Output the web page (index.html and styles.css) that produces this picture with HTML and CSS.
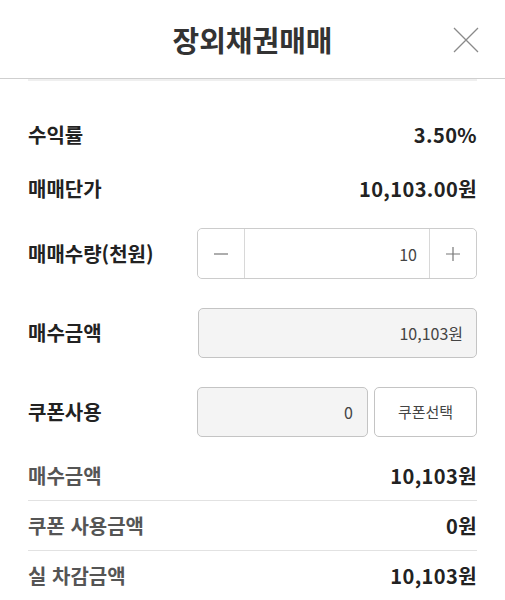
FILE: index.html
```html
<!DOCTYPE html>
<html lang="ko">
<head>
    <meta charset="UTF-8">
    <meta name="viewport" content="width=device-width, initial-scale=1.0">
    <title>장외채권매매</title>
    <link rel="stylesheet" href="styles.css">
</head>
<body>

    <div class="popup">
        <div class="popup-header">
            <h2>장외채권매매</h2>
            <button type="button" class="close-btn" aria-label="닫기">
                <svg width="26" height="26" viewBox="0 0 26 26">
                    <path d="M1 1 L25 25 M25 1 L1 25" stroke="#8a8a8a" stroke-width="1.3" fill="none"/>
                </svg>
            </button>
        </div>
        <div class="header-shade"></div>

        <div class="content">
            <div class="info-row">
                <span class="label">수익률</span>
                <span class="value">3.50%</span>
            </div>
            <div class="info-row">
                <span class="label">매매단가</span>
                <span class="value">10,103.00원</span>
            </div>

            <div class="form-row first">
                <span class="label">매매수량(천원)</span>
                <div class="stepper">
                    <button type="button" class="step-btn">
                        <svg width="16" height="16" viewBox="0 0 16 16"><path d="M1 8 H15" stroke="#777" stroke-width="1.2"/></svg>
                    </button>
                    <input type="text" class="step-input" value="10">
                    <button type="button" class="step-btn">
                        <svg width="16" height="16" viewBox="0 0 16 16"><path d="M1 8 H15 M8 1 V15" stroke="#777" stroke-width="1.2"/></svg>
                    </button>
                </div>
            </div>

            <div class="form-row">
                <span class="label">매수금액</span>
                <div class="field readonly">10,103원</div>
            </div>

            <div class="form-row">
                <span class="label">쿠폰사용</span>
                <div class="coupon">
                    <div class="field readonly">0</div>
                    <button type="button" class="coupon-btn">쿠폰선택</button>
                </div>
            </div>

            <div class="summary">
                <div class="summary-row">
                    <span class="sum-label">매수금액</span>
                    <span class="value">10,103원</span>
                </div>
                <div class="summary-row">
                    <span class="sum-label">쿠폰 사용금액</span>
                    <span class="value">0원</span>
                </div>
                <div class="summary-row">
                    <span class="sum-label">실 차감금액</span>
                    <span class="value">10,103원</span>
                </div>
            </div>
        </div>
    </div>

</body>
</html>
```

FILE: styles.css
```css
/* Body styling */
body {
    margin: 0;
    background: #ffffff;
    font-family: 'Noto Sans CJK KR', 'Noto Sans', sans-serif;
    color: #222;
}

.popup {
    width: 505px;
}

/* Header */
.popup-header {
    height: 78px;
    border-bottom: 1px solid #cfcfcf;
    display: flex;
    justify-content: center;
    align-items: center;
    position: relative;
}

.popup-header h2 {
    margin: 0;
    font-size: 29px;
    font-weight: 700;
    color: #333;
    line-height: 1;
}

.close-btn {
    position: absolute;
    right: 26px;
    top: 27px;
    padding: 0;
    border: none;
    background: none;
    width: 26px;
    height: 26px;
    display: flex;
}

.header-shade {
    height: 2px;
    margin: 0 28px;
    background: #efefef;
}

/* Content */
.content {
    padding: 0 28px;
}

.label {
    font-size: 20px;
    font-weight: 700;
    color: #222;
}

.value {
    font-size: 20px;
    font-weight: 700;
    color: #222;
    letter-spacing: 0.4px;
}

.info-row {
    height: 54px;
    display: flex;
    justify-content: space-between;
    align-items: center;
}

.info-row:first-child {
    margin-top: 26px;
}

/* Form rows */
.form-row {
    display: flex;
    justify-content: space-between;
    align-items: center;
    height: 51px;
    margin-top: 28px;
}

.form-row.first {
    margin-top: 13px;
}

.stepper {
    width: 278px;
    height: 49px;
    border: 1px solid #cccccc;
    border-radius: 5px;
    display: flex;
}

.step-btn {
    width: 46px;
    border: none;
    background: #fff;
    padding: 0;
    display: flex;
    align-items: center;
    justify-content: center;
    border-radius: 5px;
}

.step-input {
    flex: 1;
    min-width: 0;
    border: none;
    border-left: 1px solid #d8d8d8;
    border-right: 1px solid #d8d8d8;
    text-align: right;
    padding: 0 12px 0 0;
    font-family: 'Noto Sans CJK KR', 'Noto Sans', sans-serif;
    font-size: 16px;
    color: #444;
    outline: none;
}

.field {
    height: 48px;
    border: 1px solid #c4c4c4;
    border-radius: 5px;
    display: flex;
    align-items: center;
    justify-content: flex-end;
    padding: 0 13px;
    font-size: 16px;
    color: #444;
}

.form-row > .field {
    width: 251px;
}

.readonly {
    background: #f4f4f4;
}

.coupon {
    display: flex;
    gap: 6px;
}

.coupon .field {
    width: 142px;
    padding-right: 14px;
}

.coupon-btn {
    width: 103px;
    height: 50px;
    border: 1px solid #c4c4c4;
    border-radius: 5px;
    background: #fff;
    font-family: 'Noto Sans CJK KR', 'Noto Sans', sans-serif;
    font-size: 15px;
    color: #444;
    padding: 0;
}

/* Summary */
.summary {
    margin-top: 14px;
}

.summary-row {
    height: 49px;
    display: flex;
    justify-content: space-between;
    align-items: center;
    border-bottom: 1px solid #e2e2e2;
}

.summary-row:last-child {
    border-bottom: none;
}

.sum-label {
    font-size: 20px;
    font-weight: 700;
    color: #555;
}
```
